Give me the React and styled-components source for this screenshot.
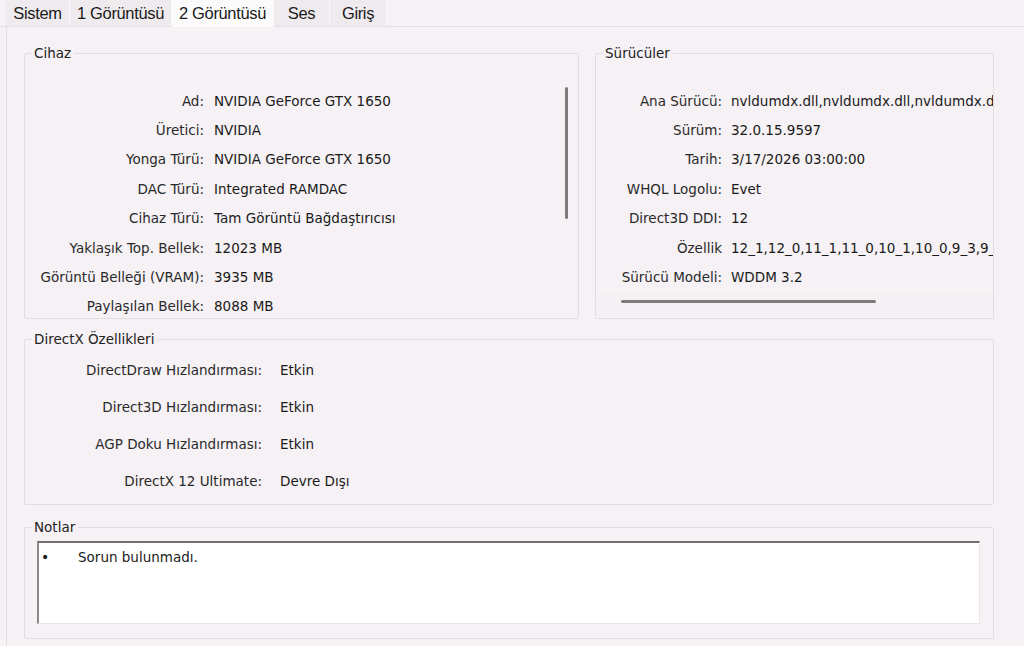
import React from "react";
import styled, { createGlobalStyle } from "styled-components";

const GlobalStyle = createGlobalStyle`
  html, body {
    margin: 0;
    padding: 0;
    background: #f5f1f4;
  }
  body {
    font-family: "DejaVu Sans", Verdana, sans-serif;
    color: #1c1c1c;
  }
`;

const Window = styled.div`
  width: 1024px;
  height: 646px;
  overflow: hidden;
  background: #f5f1f4;
  display: flex;
  flex-direction: column;
`;

const TabBar = styled.div`
  display: flex;
  height: 26px;
  padding-left: 6px;
  border-bottom: 1px solid #e4e0e3;
`;

const Tab = styled.div`
  display: flex;
  align-items: center;
  justify-content: center;
  width: ${(p) => p.$w}px;
  height: ${(p) => (p.$active ? 27 : 26)}px;
  font-family: "Liberation Sans", Arial, sans-serif;
  font-size: 16.5px;
  letter-spacing: -0.35px;
  background: ${(p) => (p.$active ? "#fcfbfc" : "#eeeaed")};
  border-right: 1px solid #f8f6f8;
  color: #1a1a1a;
  position: relative;
  z-index: ${(p) => (p.$active ? 1 : 0)};
  box-sizing: border-box;
`;

const Panel = styled.div`
  flex: 1;
  margin-left: 6px;
  border-left: 1px solid #e2dee1;
  padding: 18px 30px 0 17px;
  display: flex;
  flex-direction: column;
  gap: 12px;
`;

const TopRow = styled.div`
  display: flex;
  gap: 16px;
`;

const Group = styled.fieldset`
  margin: ${(p) => p.$mt || 0}px 0 0 0;
  padding: 0;
  border: 1px solid #e1dde0;
  border-radius: 2px;
  width: ${(p) => p.$w}px;
  height: ${(p) => p.$h}px;
  box-sizing: border-box;
  min-width: 0;
  position: relative;
  overflow: hidden;
`;

const Legend = styled.legend`
  font-size: 13.5px;
  line-height: 16px;
  padding: 0 3px 0 2px;
  margin-left: 7px;
  color: #222;
`;

const InfoList = styled.div`
  display: grid;
  grid-template-columns: ${(p) => p.$label}px max-content;
  column-gap: ${(p) => p.$gap}px;
  grid-auto-rows: ${(p) => p.$row}px;
  align-items: center;
  padding-top: ${(p) => p.$top}px;
  font-size: 13.5px;
  white-space: nowrap;
`;

const Label = styled.span`
  text-align: right;
  color: #2a2a2a;
`;

const Value = styled.span`
  color: #1a1a1a;
`;

const VScroll = styled.div`
  position: absolute;
  left: 540px;
  top: 26px;
  width: 3px;
  height: 132px;
  border-radius: 2px;
  background: #7c7c7c;
`;

const HTrack = styled.div`
  position: absolute;
  left: 0;
  right: 0;
  bottom: 0;
  height: 28px;
  border-top: 1px solid #fbfafb;
  background: #f4f0f3;
`;

const HThumb = styled.div`
  position: absolute;
  left: 25px;
  top: 10px;
  width: 255px;
  height: 3px;
  border-radius: 2px;
  background: #7c7c7c;
`;

const NoteBox = styled.div`
  margin: 6px 13px 0 12px;
  height: 83px;
  background: #ffffff;
  border-top: 2px solid #6e6e6e;
  border-left: 2px solid #8a8a8a;
  border-right: 1px solid #e6e6e6;
  border-bottom: 1px solid #e6e6e6;
  box-sizing: border-box;
  padding: 6px 0 0 2px;
  display: flex;
  align-items: flex-start;
  font-size: 13.5px;
`;

const Bullet = styled.span`
  width: 37px;
  font-size: 14px;
  line-height: 17px;
`;

const device = [
  ["Ad:", "NVIDIA GeForce GTX 1650"],
  ["Üretici:", "NVIDIA"],
  ["Yonga Türü:", "NVIDIA GeForce GTX 1650"],
  ["DAC Türü:", "Integrated RAMDAC"],
  ["Cihaz Türü:", "Tam Görüntü Bağdaştırıcısı"],
  ["Yaklaşık Top. Bellek:", "12023 MB"],
  ["Görüntü Belleği (VRAM):", "3935 MB"],
  ["Paylaşılan Bellek:", "8088 MB"],
];

const drivers = [
  ["Ana Sürücü:", "nvldumdx.dll,nvldumdx.dll,nvldumdx.dll,nvldumdx.dll"],
  ["Sürüm:", "32.0.15.9597"],
  ["Tarih:", "3/17/2026 03:00:00"],
  ["WHQL Logolu:", "Evet"],
  ["Direct3D DDI:", "12"],
  ["Özellik", "12_1,12_0,11_1,11_0,10_1,10_0,9_3,9_2,9_1"],
  ["Sürücü Modeli:", "WDDM 3.2"],
];

const features = [
  ["DirectDraw Hızlandırması:", "Etkin"],
  ["Direct3D Hızlandırması:", "Etkin"],
  ["AGP Doku Hızlandırması:", "Etkin"],
  ["DirectX 12 Ultimate:", "Devre Dışı"],
];

const tabs = [
  ["Sistem", 64],
  ["1 Görüntüsü", 102],
  ["2 Görüntüsü", 102, true],
  ["Ses", 56],
  ["Giriş", 57],
];

const Rows = ({ items }) =>
  items.map(([k, v]) => (
    <React.Fragment key={k}>
      <Label>{k}</Label>
      <Value>{v}</Value>
    </React.Fragment>
  ));

export default function App() {
  return (
    <Window>
      <GlobalStyle />
      <TabBar>
        {tabs.map(([t, w, active]) => (
          <Tab key={t} $w={w} $active={active}>
            {t}
          </Tab>
        ))}
      </TabBar>
      <Panel>
        <TopRow>
          <Group $w={555} $h={274}>
            <Legend>Cihaz</Legend>
            <InfoList $label={179} $gap={10} $row={29.4} $top={25}>
              <Rows items={device} />
            </InfoList>
            <VScroll />
          </Group>
          <Group $w={399} $h={274}>
            <Legend>Sürücüler</Legend>
            <InfoList $label={126} $gap={9} $row={29.4} $top={25}>
              <Rows items={drivers} />
            </InfoList>
            <HTrack>
              <HThumb />
            </HTrack>
          </Group>
        </TopRow>
        <Group $w={970} $h={174}>
          <Legend>DirectX Özellikleri</Legend>
          <InfoList $label={237} $gap={18} $row={37} $top={4}>
            <Rows items={features} />
          </InfoList>
        </Group>
        <Group $w={970} $h={120} $mt={2}>
          <Legend>Notlar</Legend>
          <NoteBox>
            <Bullet>•</Bullet>
            <span>Sorun bulunmadı.</span>
          </NoteBox>
        </Group>
      </Panel>
    </Window>
  );
}
